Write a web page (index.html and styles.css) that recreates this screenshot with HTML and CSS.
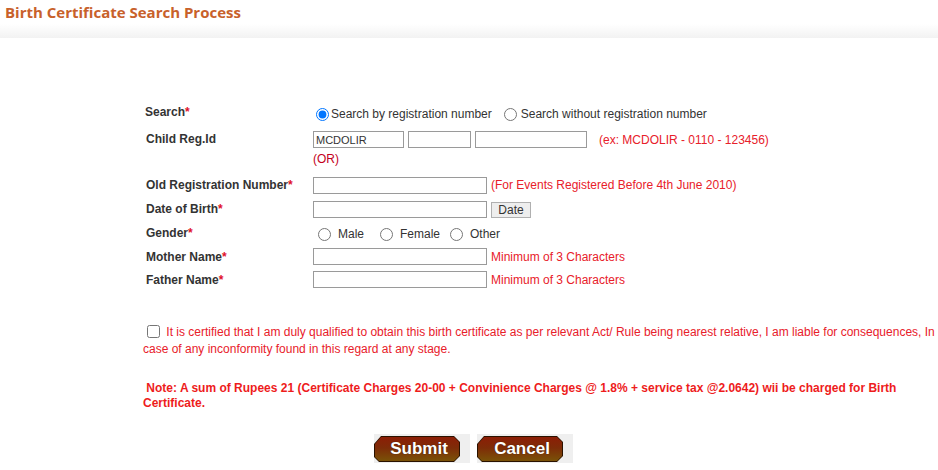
FILE: index.html
```html
<!DOCTYPE html>
<html lang="en">
<head>
    <meta charset="UTF-8">
    <title>Birth Certificate Search Process</title>
    <link rel="stylesheet" href="styles.css">
</head>
<body>
<div class="header">
    <h1>Birth Certificate Search Process</h1>
</div>

<div class="search-form">
    <div class="row row-search">
        <div class="label">Search<span class="req">*</span></div>
        <div class="field">
            <label class="opt"><input type="radio" name="mode" checked>Search by registration number</label>
            <label class="opt opt-second"><input type="radio" name="mode">Search without registration number</label>
        </div>
    </div>

    <div class="row row-child">
        <div class="label label-child">Child Reg.Id</div>
        <div class="field field-child">
            <div class="reg-parts">
                <input type="text" class="box box-a" value="MCDOLIR">
                <input type="text" class="box box-b">
                <input type="text" class="box box-c">
                <span class="hint hint-ex">(ex: MCDOLIR - 0110 - 123456)</span>
            </div>
            <div class="or">(OR)</div>
        </div>
    </div>

    <div class="row">
        <div class="label">Old Registration Number<span class="req">*</span></div>
        <div class="field">
            <input type="text" class="box box-wide">
            <span class="hint">(For Events Registered Before 4th June 2010)</span>
        </div>
    </div>

    <div class="row">
        <div class="label">Date of Birth<span class="req">*</span></div>
        <div class="field">
            <input type="text" class="box box-wide">
            <button type="button" class="date-btn">Date</button>
        </div>
    </div>

    <div class="row">
        <div class="label">Gender<span class="req">*</span></div>
        <div class="field gender">
            <label class="g-opt"><input type="radio" name="gender"><span>Male</span></label>
            <label class="g-opt"><input type="radio" name="gender"><span>Female</span></label>
            <label class="g-opt"><input type="radio" name="gender"><span>Other</span></label>
        </div>
    </div>

    <div class="row row-short">
        <div class="label">Mother Name<span class="req">*</span></div>
        <div class="field">
            <input type="text" class="box box-wide">
            <span class="hint">Minimum of 3 Characters</span>
        </div>
    </div>

    <div class="row row-short">
        <div class="label">Father Name<span class="req">*</span></div>
        <div class="field">
            <input type="text" class="box box-wide">
            <span class="hint">Minimum of 3 Characters</span>
        </div>
    </div>
</div>

<p class="declare"><input type="checkbox"> It is certified that I am duly qualified to obtain this birth certificate as per relevant Act/ Rule being nearest relative, I am liable for consequences, In case of any inconformity found in this regard at any stage.</p>

<p class="note">&nbsp;Note: A sum of Rupees 21 (Certificate Charges 20-00 + Convinience Charges @ 1.8% + service tax @2.0642) wii be charged for Birth Certificate.</p>

<div class="actions">
    <span class="img-btn"><span class="btn-edge"><span class="btn-face">Submit</span></span></span>
    <span class="img-btn"><span class="btn-edge"><span class="btn-face">Cancel</span></span></span>
</div>
</body>
</html>
```

FILE: styles.css
```css
body {
    margin: 0;
    font-family: "Liberation Sans", Arial, sans-serif;
    font-size: 12px;
    color: #333;
    background: #fff;
}
.header {
    height: 38px;
    background: linear-gradient(to bottom, #fff 0, #fff 24px, #f2f2f2 38px);
}
.header h1 {
    margin: 0;
    padding: 2px 0 0 5px;
    font-family: "Open Sans", sans-serif;
    font-size: 15px;
    font-weight: 700;
    line-height: 20px;
    color: #c8612b;
}
.search-form {
    padding: 63px 0 0 145px;
}
.row {
    display: flex;
    align-items: center;
    height: 24px;
}
.row-search {
    height: 22px;
}
.row-short {
    height: 23px;
}
.label {
    width: 168px;
    flex: none;
    font-weight: bold;
    color: #333;
}
.label-child, .row .label {
    padding-left: 1px;
    box-sizing: border-box;
}
.row-search .label {
    padding-left: 0;
}
.req {
    color: #e0102a;
}
.field {
    display: flex;
    align-items: center;
}
.row-search .field {
    padding-top: 4px;
}
.opt {
    display: flex;
    align-items: center;
}
.opt input {
    margin: 0 2px 0 3px;
}
.opt-second {
    margin-left: 12px;
}
.opt-second input {
    margin-left: 0;
    margin-right: 4px;
}
.row-child {
    height: auto;
    align-items: flex-start;
    padding-top: 8px;
    margin-bottom: 7px;
}
.row-child .label {
    line-height: 17px;
}
.field-child {
    display: block;
}
.reg-parts {
    display: flex;
    align-items: center;
    gap: 4px;
}
.box {
    height: 17px;
    margin: 0;
    padding: 0 2px;
    border: 1px solid #9a9a9a;
    box-sizing: border-box;
    font-family: "Liberation Sans", Arial, sans-serif;
    font-size: 11px;
    color: #333;
    background: #fff;
    outline: none;
}
.box-a { width: 91px; }
.box-b { width: 63px; }
.box-c { width: 112px; }
.box-wide { width: 174px; }
.hint {
    color: #e8202a;
    margin-left: 4px;
}
.hint-ex {
    margin-left: 8px;
}
.or {
    margin-top: 5px;
    line-height: 13px;
    color: #c4001c;
}
.date-btn {
    margin: 1px 0 0 4px;
    height: 16px;
    width: 40px;
    padding: 0;
    border: 1px solid #b0b0b0;
    background: #eee;
    font-family: "Liberation Sans", Arial, sans-serif;
    font-size: 12px;
    color: #333;
    line-height: 14px;
}
.gender {
    padding-left: 5px;
    padding-top: 2px;
}
.g-opt {
    display: flex;
    align-items: center;
}
.g-opt input {
    margin: 0 7px 0 0;
}
.g-opt:nth-child(1) { margin-right: 16px; }
.g-opt:nth-child(2) { margin-right: 10px; }
.declare {
    margin: 33px 0 0 143px;
    line-height: 17px;
    color: #e8202a;
}
.declare input {
    margin: 0 3px 0 4px;
    vertical-align: -2px;
}
.note {
    margin: 23px 0 0 143px;
    line-height: 15px;
    font-weight: bold;
    color: #ee1c1c;
}
.actions {
    display: flex;
    gap: 7px;
    margin-top: 23px;
    padding-left: 374px;
}
.img-btn {
    display: block;
    width: 96px;
    height: 29px;
    padding-top: 2px;
    box-sizing: border-box;
    background: #efefef;
}
.btn-edge {
    display: block;
    width: 86px;
    height: 26px;
    padding: 1px;
    box-sizing: border-box;
    background: #2a1200;
    clip-path: polygon(7px 0, calc(100% - 6px) 0, 100% 6px, 100% calc(100% - 6px), calc(100% - 6px) 100%, 5px 100%, 0 calc(100% - 5px), 0 8px);
}
.btn-face {
    display: block;
    height: 24px;
    line-height: 24px;
    text-align: center;
    padding-left: 4px;
    font-size: 17px;
    font-weight: bold;
    color: #fff;
    text-shadow: 0 0 1px #3a1a00;
    background: linear-gradient(to bottom, #8c1e06 0, #7e2c08 45%, #7a5208 100%);
    clip-path: polygon(6px 0, calc(100% - 5px) 0, 100% 5px, 100% calc(100% - 5px), calc(100% - 5px) 100%, 4px 100%, 0 calc(100% - 4px), 0 7px);
}
```
